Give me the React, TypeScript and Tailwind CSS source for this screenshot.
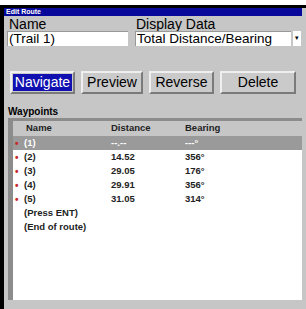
import React from 'react';

const rows = [
  { name: '(1)', dist: '--.--', bear: '---°', dot: true, sel: true },
  { name: '(2)', dist: '14.52', bear: '356°', dot: true },
  { name: '(3)', dist: '29.05', bear: '176°', dot: true },
  { name: '(4)', dist: '29.91', bear: '356°', dot: true },
  { name: '(5)', dist: '31.05', bear: '314°', dot: true },
  { name: '(Press ENT)', dist: '', bear: '', dot: false },
  { name: '(End of route)', dist: '', bear: '', dot: false },
];

function Btn({ label, focused, w }: { label: string; focused?: boolean; w: string }) {
  return (
    <div
      className={`${w} h-[23px] flex items-center justify-center border-t-2 border-l-2 border-t-[#efefef] border-l-[#efefef] border-b-2 border-r-2 border-b-[#7a7a7a] border-r-[#7a7a7a] bg-[#cacaca] text-[14px] text-black`}
    >
      <span className={focused ? 'bg-[#1010b0] text-white px-[2px] leading-[17px]' : 'leading-[17px]'}>{label}</span>
    </div>
  );
}

export default function App() {
  return (
    <div
      className="w-[306px] h-[309px] bg-white pt-[5px] overflow-hidden"
      style={{ fontFamily: '"Liberation Sans", Arial, sans-serif' }}
    >
      <div className="h-[304px] border-l-[4px] border-t-[3px] border-black bg-[#c6c6c6] flex flex-col">
        <div className="h-[8px] mr-[4px] bg-[#08089a] text-white text-[7px] font-bold leading-[8px] pl-[2px]">
          Edit Route
        </div>
        <div className="flex pl-[3px] pt-[1px] gap-[7px]">
          <div className="w-[121px] flex flex-col">
            <div className="text-[14px] leading-[14px] pl-[2px] text-black">Name</div>
            <div className="h-[15px] bg-white border-l border-t border-[#999] text-[13.5px] leading-[14px] pl-[1px] text-black">
              (Trail 1)
            </div>
          </div>
          <div className="flex flex-col">
            <div className="text-[14px] leading-[14px] pl-[1px] text-black">Display Data</div>
            <div className="flex">
              <div className="w-[156px] h-[15px] bg-white border-l border-t border-[#999] text-[13.5px] leading-[14px] pl-[1px] text-black whitespace-nowrap overflow-hidden">
                Total Distance/Bearing
              </div>
              <div className="ml-[2px] w-[8px] h-[15px] bg-white flex items-center justify-center text-[7px] text-black">▾</div>
            </div>
          </div>
        </div>
        <div className="flex pl-[6px] pt-[25px] gap-[6px]">
          <Btn label="Navigate" focused w="w-[65px]" />
          <Btn label="Preview" w="w-[62px]" />
          <Btn label="Reverse" w="w-[65px]" />
          <Btn label="Delete" w="w-[76px]" />
        </div>
        <div className="pl-[4px] pt-[12px] text-[10px] font-bold leading-[12px] text-black">Waypoints</div>
        <div className="ml-[4px] mr-[4px] mb-[9px] flex-1 border-l-[5px] border-t-[3px] border-[#8c8c8c] bg-white flex flex-col">
          <div className="flex h-[15px] items-center bg-[#c6c6c6] text-[9.5px] font-bold text-[#222]">
            <div className="w-[98px] pl-[13px]">Name</div>
            <div className="w-[74px]">Distance</div>
            <div>Bearing</div>
          </div>
          {rows.map((r) => (
            <div
              key={r.name}
              className={`flex h-[14px] items-center text-[9.5px] font-bold ${r.sel ? 'bg-[#9a9a9a] text-white' : 'text-[#222]'}`}
            >
              <div className="w-[98px] flex items-center">
                <span className={`w-[9px] pl-[2px] text-[10px] ${r.dot ? 'text-[#c82828]' : 'text-transparent'}`}>•</span>
                <span className="pl-[2px]">{r.name}</span>
              </div>
              <div className="w-[74px]">{r.dist}</div>
              <div>{r.bear}</div>
            </div>
          ))}
        </div>
      </div>
    </div>
  );
}
